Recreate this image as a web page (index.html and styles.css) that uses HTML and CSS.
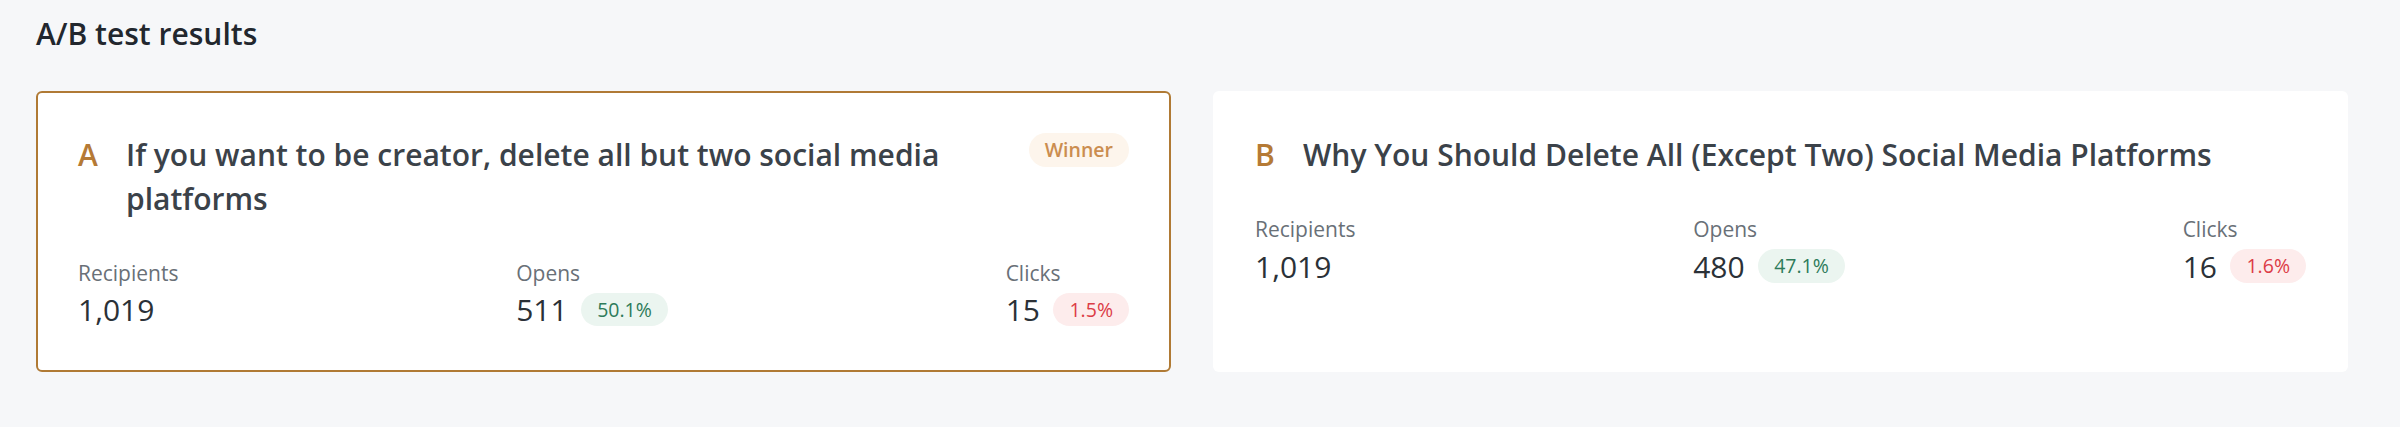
FILE: index.html
```html
<!DOCTYPE html>
<html lang="en">
<head>
<meta charset="utf-8">
<title>A/B test results</title>
<link rel="stylesheet" href="styles.css">
</head>
<body>
<main class="page">
  <h1 class="page-title">A/B test results</h1>
  <div class="variants">
    <section class="variant variant--winner">
      <div class="variant-head">
        <span class="variant-letter">A</span>
        <h2 class="variant-subject">If you want to be creator, delete all but two social media platforms</h2>
        <span class="badge badge--winner">Winner</span>
      </div>
      <div class="stats">
        <div class="stat">
          <div class="stat-label">Recipients</div>
          <div class="stat-value"><span class="stat-number">1,019</span></div>
        </div>
        <div class="stat">
          <div class="stat-label">Opens</div>
          <div class="stat-value"><span class="stat-number">511</span><span class="badge badge--up">50.1%</span></div>
        </div>
        <div class="stat">
          <div class="stat-label">Clicks</div>
          <div class="stat-value"><span class="stat-number">15</span><span class="badge badge--down">1.5%</span></div>
        </div>
      </div>
    </section>
    <section class="variant">
      <div class="variant-head">
        <span class="variant-letter">B</span>
        <h2 class="variant-subject">Why You Should Delete All (Except Two) Social Media Platforms</h2>
      </div>
      <div class="stats">
        <div class="stat">
          <div class="stat-label">Recipients</div>
          <div class="stat-value"><span class="stat-number">1,019</span></div>
        </div>
        <div class="stat">
          <div class="stat-label">Opens</div>
          <div class="stat-value"><span class="stat-number">480</span><span class="badge badge--up">47.1%</span></div>
        </div>
        <div class="stat">
          <div class="stat-label">Clicks</div>
          <div class="stat-value"><span class="stat-number">16</span><span class="badge badge--down">1.6%</span></div>
        </div>
      </div>
    </section>
  </div>
</main>
</body>
</html>
```

FILE: styles.css
```css
* {
  box-sizing: border-box;
}

html,
body {
  margin: 0;
  background: #f6f7f9;
}

body {
  font-family: "Open Sans", "Noto Sans", "Liberation Sans", sans-serif;
  color: #2f363d;
}

.page {
  padding: 13px 52px 40px 36px;
}

.page-title {
  margin: 0 0 37px;
  font-size: 30px;
  font-weight: 600;
  line-height: 41px;
  color: #22272e;
}

.variants {
  display: grid;
  grid-template-columns: 1fr 1fr;
  gap: 42px;
}

.variant {
  background: #ffffff;
  border: 2px solid transparent;
  border-radius: 6px;
  padding: 40px;
}

.variant--winner {
  border-color: #b07a35;
}

.variant-head {
  display: flex;
  align-items: flex-start;
}

.variant-letter {
  flex: none;
  width: 30px;
  margin-right: 18px;
  font-size: 30px;
  font-weight: 600;
  line-height: 43.5px;
  color: #b57a35;
}

.variant-subject {
  flex: 1;
  margin: 0;
  font-size: 30px;
  font-weight: 600;
  line-height: 43.5px;
  color: #3b4249;
}

.badge {
  display: inline-block;
  flex: none;
  padding: 6px 16px;
  border-radius: 999px;
  font-size: 19.5px;
  font-weight: 400;
  line-height: 21.5px;
  white-space: nowrap;
}

.badge--winner {
  margin-left: 24px;
  background: #fdf5ec;
  color: #cb8d50;
  font-weight: 600;
}

.badge--up {
  background: #ebf5f0;
  color: #2e7b5a;
}

.badge--down {
  background: #fdecec;
  color: #dc3c46;
}

.stats {
  display: flex;
  justify-content: space-between;
  margin-top: 37.5px;
}

.stat-label {
  font-size: 21px;
  line-height: 31.5px;
  color: #697077;
}

.stat-value {
  display: flex;
  align-items: center;
  gap: 13.5px;
  height: 41px;
}

.stat-number {
  font-size: 30px;
  font-weight: 400;
  line-height: 41px;
  color: #2b3137;
}
```
